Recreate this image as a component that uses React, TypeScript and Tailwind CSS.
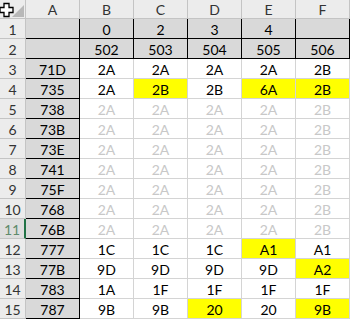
const COLS = ['A', 'B', 'C', 'D', 'E', 'F'];

type Row = { cells: string[]; yellow?: number[]; faded?: boolean };

const ROWS: Row[] = [
  { cells: ['', '0', '2', '3', '4', ''] },
  { cells: ['', '502', '503', '504', '505', '506'] },
  { cells: ['71D', '2A', '2A', '2A', '2A', '2B'] },
  { cells: ['735', '2A', '2B', '2B', '6A', '2B'], yellow: [2, 4, 5] },
  { cells: ['738', '2A', '2A', '2A', '2A', '2B'], faded: true },
  { cells: ['73B', '2A', '2A', '2A', '2A', '2B'], faded: true },
  { cells: ['73E', '2A', '2A', '2A', '2A', '2B'], faded: true },
  { cells: ['741', '2A', '2A', '2A', '2A', '2B'], faded: true },
  { cells: ['75F', '2A', '2A', '2A', '2A', '2B'], faded: true },
  { cells: ['768', '2A', '2A', '2A', '2A', '2B'], faded: true },
  { cells: ['76B', '2A', '2A', '2A', '2A', '2B'], faded: true },
  { cells: ['777', '1C', '1C', '1C', 'A1', 'A1'], yellow: [4] },
  { cells: ['77B', '9D', '9D', '9D', '9D', 'A2'], yellow: [5] },
  { cells: ['783', '1A', '1F', '1F', '1F', '1F'] },
  { cells: ['787', '9B', '9B', '20', '20', '9B'], yellow: [3, 5] },
];

function Corner() {
  return (
    <div className="relative h-[19px] border-r border-b border-[#c4c4c4] bg-[#ececec]">
      <svg width="26" height="19" className="absolute left-0 top-0">
        <polygon points="24,5 24,17 12,17" fill="#b8b8b8" />
        <path
          d="M4 3.5 h5 v4 h4 v5 h-4 v4 h-5 v-4 h-4 v-5 h4 z"
          fill="#fff"
          stroke="#000"
          strokeWidth="1.3"
        />
      </svg>
    </div>
  );
}

export default function App() {
  return (
    <div className="w-[350px] h-[320px] overflow-hidden bg-white font-['Lato',sans-serif] text-[14px] leading-none">
      <div className="grid grid-cols-[26px_repeat(6,54px)] grid-rows-[19px_repeat(15,20px)]">
        <Corner />
        {COLS.map(c => (
          <div
            key={c}
            className="flex items-center justify-center pt-[1px] border-r border-b border-[#c4c4c4] bg-[#ececec] text-[#333]">
            {c}
          </div>
        ))}

        {ROWS.map((row, r) => {
          const n = r + 1;
          const headerRow = n <= 2;
          const selected = n === 11;
          return [
            <div
              key={`h${n}`}
              className={`flex items-center justify-center pt-[2px] border-b ${
                selected
                  ? 'bg-[#dedede] text-[#5f8a6c] border-r-2 border-r-[#217346] border-b-[#c4c4c4]'
                  : 'bg-[#ececec] text-[#333] border-r border-[#c4c4c4]'
              }`}>
              {n}
            </div>,
            ...row.cells.map((v, i) => {
              const boxed = headerRow || i === 0;
              const yellow = row.yellow?.includes(i);
              const bg = boxed ? 'bg-[#d9d9d9]' : yellow ? 'bg-[#ffff00]' : 'bg-white';
              const border = boxed ? 'border-black' : 'border-[#d4d4d4]';
              const color = row.faded && i > 0 ? 'text-[#c8c8c8]' : 'text-black';
              return (
                <div
                  key={`${n}-${i}`}
                  className={`flex items-center justify-center pt-[2px] border-r border-b ${border} ${bg} ${color}`}>
                  {v}
                </div>
              );
            }),
          ];
        })}
      </div>
    </div>
  );
}
